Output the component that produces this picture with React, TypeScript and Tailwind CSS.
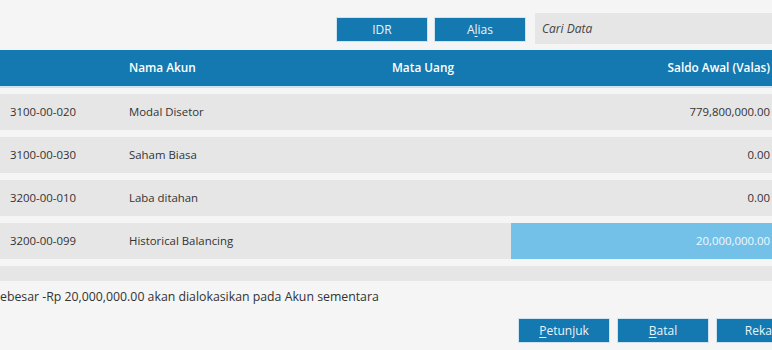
const rows = [
  { kode: "3100-00-020", nama: "Modal Disetor", saldo: "779,800,000.00" },
  { kode: "3100-00-030", nama: "Saham Biasa", saldo: "0.00" },
  { kode: "3200-00-010", nama: "Laba ditahan", saldo: "0.00" },
  { kode: "3200-00-099", nama: "Historical Balancing", saldo: "20,000,000.00", active: true },
];

function Btn({ children, className = "" }: { children: React.ReactNode; className?: string }) {
  return (
    <button
      className={`h-[25px] w-[92px] shrink-0 border border-[#cfe3ef] bg-[#1479b0] text-[12px] text-[#eaf4fa] ${className}`}
    >
      {children}
    </button>
  );
}

export default function App() {
  return (
    <main
      className="h-[350px] w-[772px] overflow-hidden bg-[#f5f5f5] text-[#333]"
      style={{ fontFamily: '"Open Sans", "Noto Sans", sans-serif' }}
    >
      {/* Toolbar */}
      <div className="flex h-[50px] items-start pt-[13px]">
        <div className="ml-[336px] mt-[4px] flex gap-[6px]">
          <Btn>IDR</Btn>
          <Btn>
            A<span className="underline underline-offset-2">l</span>ias
          </Btn>
        </div>
        <div className="ml-[9px] flex h-[31px] flex-1 items-center bg-[#e6e6e6] pl-[7px] text-[12px] italic text-[#444]">
          Cari Data
        </div>
      </div>

      {/* Table header */}
      <div className="flex h-[36px] items-center bg-[#1479b0] text-[11.8px] font-semibold text-white">
        <div className="w-[129px]" />
        <div className="w-[263px]">Nama Akun</div>
        <div className="w-[119px]">Mata Uang</div>
        <div className="flex-1 pr-[2px] text-right">Saldo Awal (Valas)</div>
      </div>
      <div className="h-[2px] bg-[#cfe3ef]" />

      {/* Rows */}
      <div className="flex h-[193px] flex-col gap-[7px] overflow-hidden pt-[6px]">
        {rows.map((r) => (
          <div key={r.kode} className="flex h-9 shrink-0 items-center bg-[#e6e6e6] text-[11.4px]">
            <div className="w-[129px] pl-[10px]">{r.kode}</div>
            <div className="w-[263px]">{r.nama}</div>
            <div className="w-[119px]" />
            <div
              className={`flex h-full flex-1 items-center justify-end pr-[2px] ${
                r.active ? "bg-[#73c1e9] text-[#f2f9fd]" : ""
              }`}
            >
              {r.saldo}
            </div>
          </div>
        ))}
        <div className="h-9 shrink-0 bg-[#e6e6e6]" />
      </div>

      {/* Note */}
      <div className="mt-[7px] h-[18px] text-[12.3px] leading-[18px]">
        ebesar -Rp 20,000,000.00 akan dialokasikan pada Akun sementara
      </div>

      {/* Footer buttons */}
      <div className="ml-[518px] mt-[12px] flex gap-[7px]">
        <Btn>
          <span className="underline underline-offset-2">P</span>etunjuk
        </Btn>
        <Btn>
          <span className="underline underline-offset-2">B</span>atal
        </Btn>
        <Btn>
          Reka<span className="underline underline-offset-2">p</span>
        </Btn>
      </div>
    </main>
  );
}
